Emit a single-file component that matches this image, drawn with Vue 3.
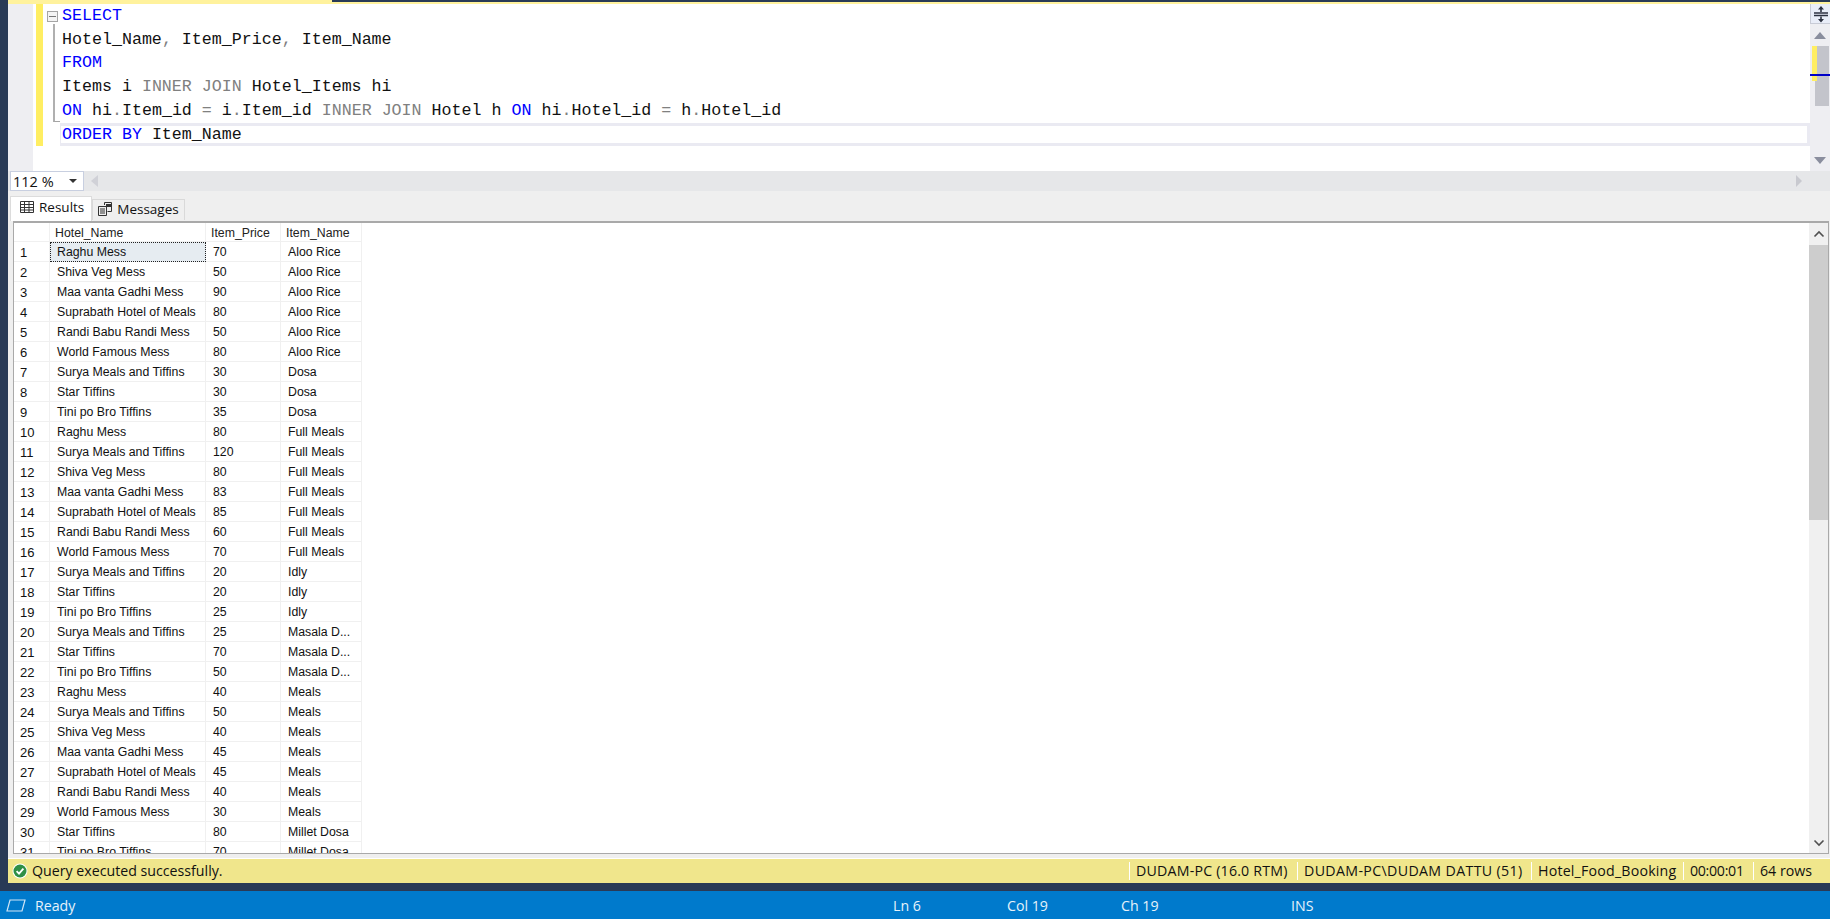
<script setup>
const rows = [
  ["Raghu Mess", 70, "Aloo Rice"],
  ["Shiva Veg Mess", 50, "Aloo Rice"],
  ["Maa vanta Gadhi Mess", 90, "Aloo Rice"],
  ["Suprabath Hotel of Meals", 80, "Aloo Rice"],
  ["Randi Babu Randi Mess", 50, "Aloo Rice"],
  ["World Famous Mess", 80, "Aloo Rice"],
  ["Surya Meals and Tiffins", 30, "Dosa"],
  ["Star Tiffins", 30, "Dosa"],
  ["Tini po Bro Tiffins", 35, "Dosa"],
  ["Raghu Mess", 80, "Full Meals"],
  ["Surya Meals and Tiffins", 120, "Full Meals"],
  ["Shiva Veg Mess", 80, "Full Meals"],
  ["Maa vanta Gadhi Mess", 83, "Full Meals"],
  ["Suprabath Hotel of Meals", 85, "Full Meals"],
  ["Randi Babu Randi Mess", 60, "Full Meals"],
  ["World Famous Mess", 70, "Full Meals"],
  ["Surya Meals and Tiffins", 20, "Idly"],
  ["Star Tiffins", 20, "Idly"],
  ["Tini po Bro Tiffins", 25, "Idly"],
  ["Surya Meals and Tiffins", 25, "Masala D..."],
  ["Star Tiffins", 70, "Masala D..."],
  ["Tini po Bro Tiffins", 50, "Masala D..."],
  ["Raghu Mess", 40, "Meals"],
  ["Surya Meals and Tiffins", 50, "Meals"],
  ["Shiva Veg Mess", 40, "Meals"],
  ["Maa vanta Gadhi Mess", 45, "Meals"],
  ["Suprabath Hotel of Meals", 45, "Meals"],
  ["Randi Babu Randi Mess", 40, "Meals"],
  ["World Famous Mess", 30, "Meals"],
  ["Star Tiffins", 80, "Millet Dosa"],
  ["Tini po Bro Tiffins", 70, "Millet Dosa"],
];

const connection = [
  "DUDAM-PC (16.0 RTM)",
  "DUDAM-PC\\DUDAM DATTU (51)",
  "Hotel_Food_Booking",
  "00:00:01",
  "64 rows",
];
</script>

<template>
  <div class="window">
    <div class="top-strip"><span class="top-dark"></span></div>

    <div class="main">
      <section class="editor">
        <div class="gutter"></div>
        <div class="change-col"><div class="change-bar"></div></div>
        <div class="fold-col">
          <div class="fold-box"></div>
          <div class="fold-line"></div>
        </div>
        <div class="code">
          <div class="line"><span class="kw">SELECT</span></div>
          <div class="line">Hotel_Name<span class="op">,</span> Item_Price<span class="op">,</span> Item_Name</div>
          <div class="line"><span class="kw">FROM</span></div>
          <div class="line">Items i <span class="op">INNER JOIN</span> Hotel_Items hi</div>
          <div class="line"><span class="kw">ON</span> hi<span class="op">.</span>Item_id <span class="op">=</span> i<span class="op">.</span>Item_id <span class="op">INNER JOIN</span> Hotel h <span class="kw">ON</span> hi<span class="op">.</span>Hotel_id <span class="op">=</span> h<span class="op">.</span>Hotel_id</div>
          <div class="line current"><span class="kw">ORDER BY</span> Item_Name</div>
        </div>
        <div class="editor-scroll">
          <div class="split-btn">
            <svg width="16" height="18" viewBox="0 0 16 18">
              <path d="M1 8h14M1 10.5h14" stroke="#2c3140" stroke-width="1.4" fill="none" />
              <path d="M8 1 5 4.5h2.2V7h1.6V4.5H11zM8 17.5 5 14h2.2v-2.5h1.6V14H11z" fill="#2c3140" />
            </svg>
          </div>
          <div class="scroll-track">
            <span class="arrow-up"></span>
            <div class="thumb-area">
              <div class="thumb"></div>
              <div class="mark-yellow"></div>
              <div class="mark-blue"></div>
            </div>
            <span class="arrow-down"></span>
          </div>
        </div>
      </section>

      <div class="hbar">
        <div class="zoom-box">
          <span>112 %</span>
          <span class="caret"></span>
        </div>
        <span class="harrow-left"></span>
        <span class="harrow-right"></span>
      </div>

      <div class="tabs">
        <div class="tab active">
          <svg width="14" height="12" viewBox="0 0 14 12">
            <path d="M.5.5h13v11H.5zM.5 3.5h13M.5 6.5h13M.5 9h13M4.5.5v11M9 .5v11" fill="none" stroke="#333" />
          </svg>
          Results
        </div>
        <div class="tab">
          <svg width="15" height="14" viewBox="0 0 15 14">
            <path d="M.5 4.5h8v9h-8zM2 7h5M2 9h5M2 11h5" fill="none" stroke="#333" />
            <path d="M6.5 3V.5h7v9h-4" fill="none" stroke="#333" />
            <path d="M8 2h5v3H8z" fill="#333" />
          </svg>
          Messages
        </div>
      </div>

      <section class="results">
        <div class="grid-wrap">
          <div class="row head">
            <div class="num"></div>
            <div class="cell">Hotel_Name</div>
            <div class="cell">Item_Price</div>
            <div class="cell">Item_Name</div>
          </div>
          <div v-for="(row, i) in rows" :key="i" class="row">
            <div class="num">{{ i + 1 }}</div>
            <div class="cell" :class="{ selected: i === 0 }">{{ row[0] }}</div>
            <div class="cell">{{ row[1] }}</div>
            <div class="cell">{{ row[2] }}</div>
          </div>
        </div>
        <div class="grid-scroll">
          <svg class="chev" width="12" height="8" viewBox="0 0 12 8">
            <path d="M1.5 6.5 6 2l4.5 4.5" fill="none" stroke="#505050" stroke-width="1.6" />
          </svg>
          <div class="grid-track"><div class="grid-thumb"></div></div>
          <svg class="chev" width="12" height="8" viewBox="0 0 12 8">
            <path d="M1.5 1.5 6 6l4.5-4.5" fill="none" stroke="#505050" stroke-width="1.6" />
          </svg>
        </div>
      </section>

      <div class="query-status">
        <svg class="ok" width="16" height="16" viewBox="0 0 16 16">
          <circle cx="8" cy="8" r="7.5" fill="#fff" />
          <circle cx="8" cy="8" r="6.5" fill="#2f8f46" />
          <path d="M4.6 8.2 7 10.6l4.4-5" fill="none" stroke="#fff" stroke-width="1.8" />
        </svg>
        <span class="query-msg">Query executed successfully.</span>
        <div class="conn">
          <span v-for="item in connection" :key="item" class="conn-item">{{ item }}</span>
        </div>
      </div>
    </div>

    <footer class="statusbar">
      <svg width="20" height="13" viewBox="0 0 20 13">
        <path d="M4 1h15l-3 11H1z" fill="none" stroke="#cfe4f5" stroke-width="1.2" />
      </svg>
      <span class="ready">Ready</span>
      <span class="st st-ln">Ln 6</span>
      <span class="st st-col">Col 19</span>
      <span class="st st-ch">Ch 19</span>
      <span class="st">INS</span>
    </footer>
  </div>
</template>

<style>
html,
body {
  margin: 0;
  background: #293a56;
}
</style>

<style scoped>
.window {
  width: 1830px;
  height: 919px;
  display: flex;
  flex-direction: column;
  overflow: hidden;
  background: #293a56;
  font-family: "Liberation Sans", Arial, sans-serif;
}

.top-strip {
  height: 4px;
  margin-left: 8px;
  flex: none;
  background: #fff29d;
}

.top-dark {
  display: block;
  margin-left: 324px;
  height: 2px;
  background: #293a56;
}

.main {
  flex: none;
  height: 879px;
  margin-left: 8px;
  display: flex;
  flex-direction: column;
  background: #efefef;
}

.editor {
  height: 167px;
  flex: none;
  display: flex;
  background: #fff;
}

.gutter {
  width: 25px;
  background: #eeeef2;
}

.change-col {
  width: 14px;
  padding-left: 3px;
  box-sizing: border-box;
}

.change-bar {
  width: 7px;
  height: 142px;
  background: #ffee62;
}

.fold-col {
  width: 15px;
  position: relative;
}

.fold-box {
  position: absolute;
  left: 0;
  top: 7px;
  width: 9px;
  height: 9px;
  border: 1px solid #a5a5a5;
  background: linear-gradient(#777, #777) center / 7px 1px no-repeat #f4f4f4;
}

.fold-line {
  position: absolute;
  left: 6px;
  top: 20px;
  width: 5px;
  height: 97px;
  border-left: 2px solid #b0b0b0;
  border-bottom: 1px solid #a5a5a5;
}

.code {
  flex: 1;
  font-family: "Liberation Mono", "DejaVu Sans Mono", monospace;
  font-size: 16.65px;
  color: #111;
}

.line {
  height: 23.7px;
  line-height: 23.7px;
  white-space: pre;
}

.line.current {
  box-sizing: border-box;
  height: 23px;
  margin-left: -2px;
  padding-left: 1px;
  line-height: 18px;
  border: 3px solid #eaeaf2;
  border-left-width: 1px;
  margin-top: 1px;
}

.kw {
  color: #0000ff;
}

.op {
  color: #808080;
}

.editor-scroll {
  width: 20px;
  flex: none;
  display: flex;
  flex-direction: column;
  background: #eeeef2;
}

.split-btn {
  height: 20px;
  box-sizing: border-box;
  background: #e9edf8;
  border: 1px solid #c8cbd6;
  border-top: none;
  border-right: none;
  display: flex;
  align-items: center;
  justify-content: center;
}

.scroll-track {
  flex: 1;
  display: flex;
  flex-direction: column;
  align-items: center;
  padding-top: 8px;
}

.arrow-up,
.arrow-down {
  width: 0;
  height: 0;
  border-left: 6px solid transparent;
  border-right: 6px solid transparent;
}

.arrow-up {
  border-bottom: 7px solid #8a8e9e;
}

.arrow-down {
  border-top: 7px solid #8a8e9e;
}

.thumb-area {
  width: 100%;
  height: 111px;
  margin-top: 7px;
  position: relative;
}

.thumb {
  position: absolute;
  left: 5px;
  top: 0;
  width: 14px;
  height: 60px;
  background: #c3c4cb;
}

.mark-yellow {
  position: absolute;
  left: 2px;
  top: 0;
  width: 5px;
  height: 35px;
  background: #ffee62;
}

.mark-blue {
  position: absolute;
  left: 0;
  top: 28px;
  width: 20px;
  height: 2px;
  background: #0000c8;
}

.hbar {
  height: 20px;
  flex: none;
  display: flex;
  align-items: center;
  background: #e6e7e9;
}

.zoom-box {
  width: 74px;
  height: 20px;
  box-sizing: border-box;
  margin-left: 2px;
  padding: 0 6px 0 2px;
  border: 1px solid #c8cfe0;
  background: #fff;
  display: flex;
  align-items: center;
  justify-content: space-between;
  font-family: "Open Sans", sans-serif;
  font-size: 14.5px;
  color: #111;
}

.caret {
  width: 0;
  height: 0;
  border-left: 4px solid transparent;
  border-right: 4px solid transparent;
  border-top: 4px solid #333;
}

.harrow-left {
  margin-left: 7px;
  width: 0;
  height: 0;
  border-top: 6px solid transparent;
  border-bottom: 6px solid transparent;
  border-right: 7px solid #d0d1d7;
}

.harrow-right {
  margin-left: auto;
  margin-right: 28px;
  width: 0;
  height: 0;
  border-top: 6px solid transparent;
  border-bottom: 6px solid transparent;
  border-left: 6px solid #c8c9cf;
}

.tabs {
  height: 30px;
  flex: none;
  display: flex;
  align-items: flex-end;
  padding-left: 2px;
  font-family: "Open Sans", sans-serif;
  font-size: 13.5px;
  color: #111;
}

.tab {
  height: 21px;
  box-sizing: border-box;
  padding: 0 5px 2px 5px;
  display: flex;
  align-items: center;
  gap: 4px;
  border: 1px solid #d9d9d9;
  border-bottom: none;
  background: #efefef;
  margin-bottom: 1px;
}

.tab.active {
  height: 25px;
  margin-bottom: 0;
  padding: 0 7px 5px 9px;
  gap: 5px;
  background: #fff;
  border-color: #dcdcdc;
}

.results {
  height: 633px;
  flex: none;
  margin-left: 5px;
  margin-right: 1px;
  box-sizing: border-box;
  display: flex;
  background: #fff;
  border: 1px solid #a9a9a9;
  border-top: 2px solid #a9a9a9;
}

.grid-wrap {
  flex: 1;
  overflow: hidden;
  font-size: 12.3px;
  color: #111;
}

.row {
  display: grid;
  grid-template-columns: 36px 156px 75px 81px;
  width: 348px;
  height: 20px;
  box-sizing: border-box;
  border-bottom: 1px solid #f0f0f0;
  line-height: 21px;
}

.row.head {
  height: 19px;
  color: #222;
}

.num {
  padding-left: 6px;
  font-size: 13px;
  line-height: 21px;
  border-right: 1px solid #f0f0f0;
}

.cell {
  padding-left: 7px;
  white-space: nowrap;
  overflow: hidden;
  height: 19px;
  border-right: 1px solid #f0f0f0;
}

.head .cell {
  padding-left: 5px;
  height: 18px;
}

.cell.selected {
  background: #e6ecf1;
  box-sizing: border-box;
  height: 20px;
  border: 1px dotted #222;
  padding-left: 6px;
  line-height: 19px;
}

.grid-scroll {
  width: 19px;
  flex: none;
  display: flex;
  flex-direction: column;
  align-items: center;
  background: #f0f0f0;
  padding: 7px 0 6px;
  box-sizing: border-box;
}

.grid-track {
  flex: 1;
  width: 100%;
  padding-top: 7px;
}

.grid-thumb {
  height: 275px;
  background: #cdcdcd;
}

.query-status {
  flex: 1;
  margin-top: 4px;
  display: flex;
  align-items: center;
  padding-left: 4px;
  background: #f0e68c;
  border-top: 1px solid #fff;
  font-family: "Open Sans", sans-serif;
  font-size: 14.2px;
  color: #111;
}

.ok {
  flex: none;
}

.query-msg {
  margin-left: 4px;
  margin-bottom: 2px;
}

.conn {
  margin-left: auto;
  display: grid;
  grid-template-columns: 168px 234px 152px 70px 77px;
}

.conn-item {
  padding-left: 6px;
  border-left: 1px solid #fff;
  line-height: 18px;
  white-space: nowrap;
}

.conn-item:nth-child(1),
.conn-item:nth-child(3) {
  letter-spacing: 0.2px;
}

.conn-item:nth-child(2) {
  letter-spacing: 0.35px;
}

.conn-item:nth-child(4) {
  letter-spacing: -0.3px;
}

.statusbar {
  height: 28px;
  margin-top: 8px;
  flex: none;
  display: flex;
  align-items: center;
  padding-left: 6px;
  background: #007acc;
  color: #e6f2fa;
  font-family: "Open Sans", sans-serif;
  font-size: 14.2px;
}

.ready {
  margin-left: 9px;
  width: 858px;
}

.st-ln {
  width: 114px;
}

.st-col {
  width: 114px;
}

.st-ch {
  width: 170px;
}
</style>
